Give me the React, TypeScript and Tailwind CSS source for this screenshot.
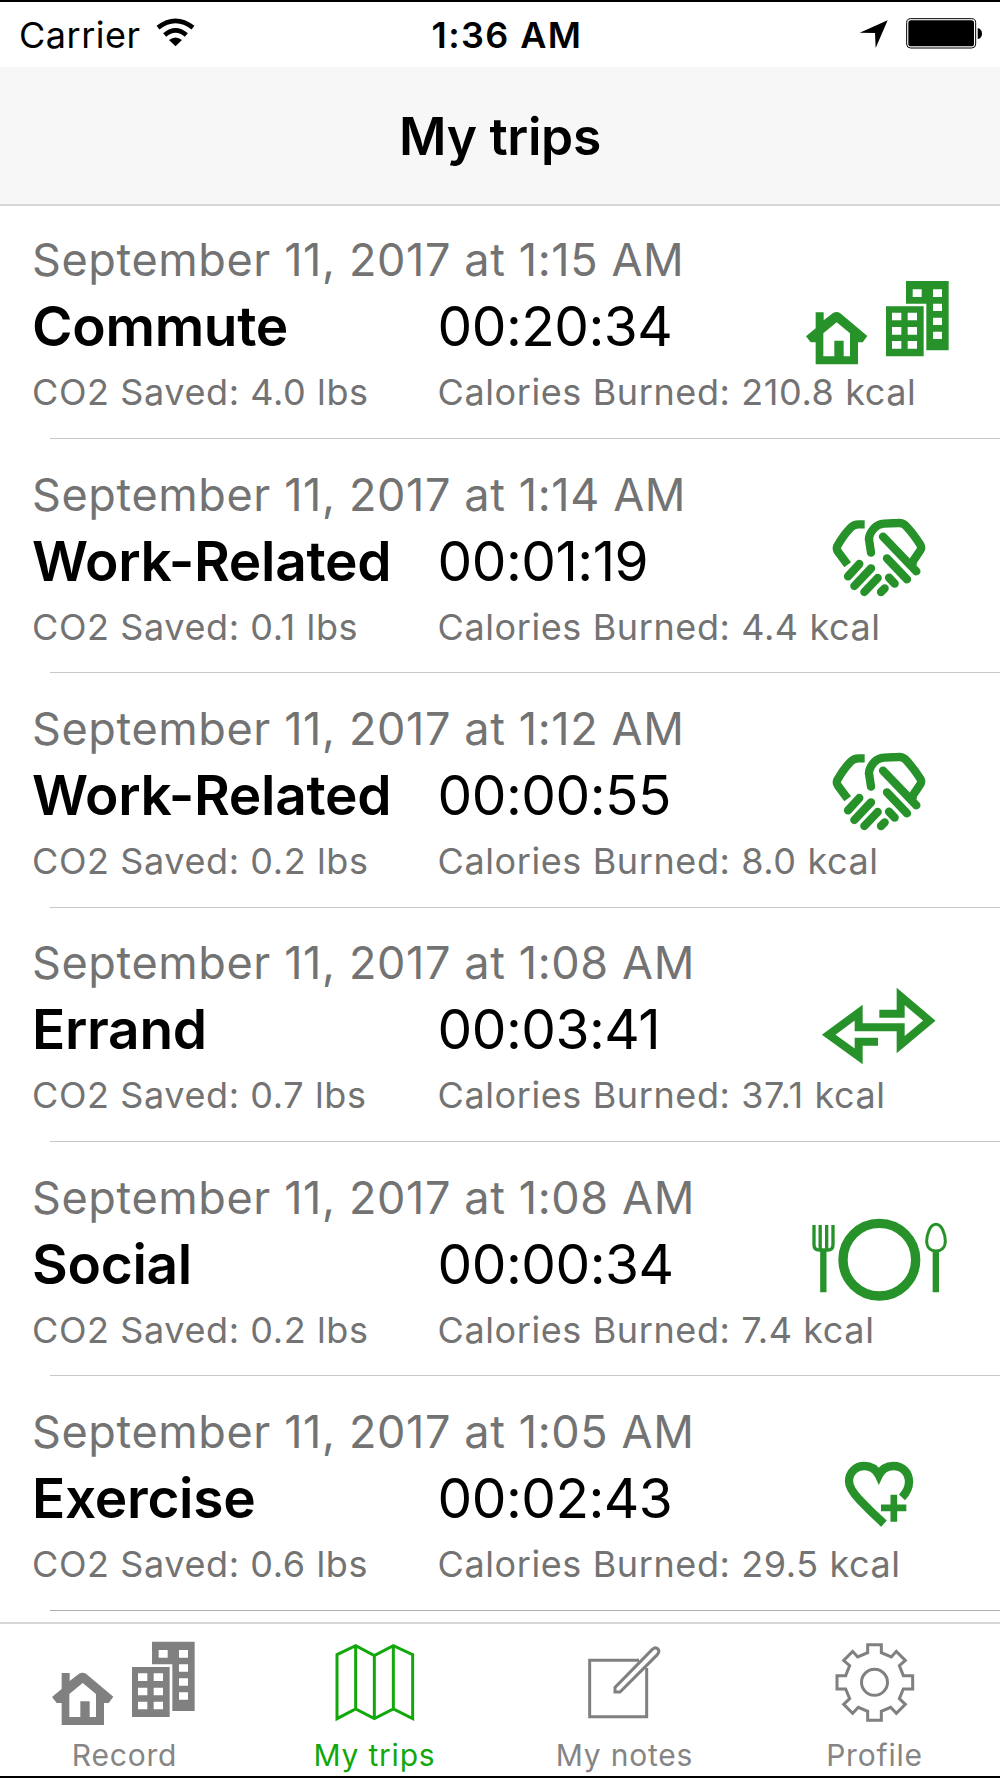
import type { FC, ReactNode } from "react";

type Purpose = "commute" | "work" | "errand" | "social" | "exercise";

interface Trip {
  date: string;
  name: string;
  purpose: Purpose;
  duration: string;
  co2: string;
  calories: string;
}

const trips: Trip[] = [
  {
    date: "September 11, 2017 at 1:15 AM",
    name: "Commute",
    purpose: "commute",
    duration: "00:20:34",
    co2: "4.0",
    calories: "210.8",
  },
  {
    date: "September 11, 2017 at 1:14 AM",
    name: "Work-Related",
    purpose: "work",
    duration: "00:01:19",
    co2: "0.1",
    calories: "4.4",
  },
  {
    date: "September 11, 2017 at 1:12 AM",
    name: "Work-Related",
    purpose: "work",
    duration: "00:00:55",
    co2: "0.2",
    calories: "8.0",
  },
  {
    date: "September 11, 2017 at 1:08 AM",
    name: "Errand",
    purpose: "errand",
    duration: "00:03:41",
    co2: "0.7",
    calories: "37.1",
  },
  {
    date: "September 11, 2017 at 1:08 AM",
    name: "Social",
    purpose: "social",
    duration: "00:00:34",
    co2: "0.2",
    calories: "7.4",
  },
  {
    date: "September 11, 2017 at 1:05 AM",
    name: "Exercise",
    purpose: "exercise",
    duration: "00:02:43",
    co2: "0.6",
    calories: "29.5",
  },
];

/* Home and office, shared by the commute row and the Record tab */
const CommuteShapes: FC = () => (
  <g fill="currentColor" fillRule="evenodd">
    <path d="M77 141H101V165L129 143Q140 137 150 143L232 212L218 231H204V297H77V231H62L48 213L77 189ZM100 273H133V226H161V273H180V204L140 171L100 204Z" />
    <path d="M348 47H476V255H409V115H348ZM368 72V95H395V72ZM429 72V95H456V72ZM429 115V137H456V115ZM429 157V179H456V157ZM429 199V221H456V199Z" />
    <path d="M288 123H401V273H288ZM306 142V165H334V142ZM353 142V165H381V142ZM306 185V208H334V185ZM353 185V208H381V185ZM306 227V250H334V227ZM353 227V250H381V227Z" />
  </g>
);

const purposeIcons: Record<Purpose, { viewBox: string; shapes: ReactNode }> = {
  commute: { viewBox: "0 -115 510 432", shapes: <CommuteShapes /> },
  work: {
    viewBox: "-60 -116 510 432",
    shapes: (
      <g fill="none" stroke="currentColor" strokeWidth="25">
        <path d="M164 71H146Q132 71 123 80Q100 103 82 136Q78 145 84 153L113 192" />
        <path d="M306 186L331 149Q336 141 331 132Q308 97 287 75Q278 66 264 67L222 69Q204 70 192 83Q176 101 177 118" />
        <path
          strokeLinecap="round"
          d="M177 116L183 156M219 108L319 212M306 186L308 190M231 173L291 236M237 231L254 249M213 274L224 263M148 190L114 227M183 203L133 256M203 232L163 274"
        />
      </g>
    ),
  },
  errand: {
    viewBox: "-30 -121 510 432",
    shapes: (
      <path
        fill="none"
        stroke="currentColor"
        strokeWidth="24"
        d="M238 130H302V78L388 151L302 223V171H176V127L86 193L176 258V214H234"
      />
    ),
  },
  social: {
    viewBox: "-30 -121 510 432",
    shapes: (
      <g fill="none" stroke="currentColor">
        <circle cx="238" cy="163" r="109" strokeWidth="28" />
        <path
          strokeWidth="10"
          d="M42 59V118Q42 134 58 134H83Q99 134 99 118V59M60.5 59V134M80 59V134"
        />
        <path
          strokeWidth="9"
          d="M408 57C426 57 436 88 436 107C436 126 424 137 408 137C392 137 380 126 380 107C380 88 390 57 408 57Z"
        />
        <path strokeWidth="19" d="M70 134V261M407.500 138V261" />
      </g>
    ),
  },
  exercise: {
    viewBox: "-120 -153 510 432",
    shapes: (
      <g fill="none" stroke="currentColor">
        <path
          strokeWidth="25"
          d="M162 221Q122 185 88 149Q57 116 57 94C57 66 78 48 103 48C124 48 138 58 146.500 76C155 58 168 48 190 48C218 48 237 68 237 96Q237 120 216 142"
        />
        <path strokeWidth="20" d="M153 173.500H229M191.500 134V215" />
      </g>
    ),
  },
};

const StatusBar: FC = () => (
  <div className="grid h-[65px] shrink-0 grid-cols-3 items-center text-4xl text-black">
    <div className="flex items-center gap-[15px] pl-[19px]">
      <span className="tracking-[0.5px]">Carrier</span>
      <svg width="39" height="29" viewBox="0 0 117 87" className="mb-[5px]">
        <g fill="none" stroke="currentColor" strokeWidth="14">
          <path d="M6 29Q58.500 -12 111 29" />
          <path d="M26 51Q58.500 23 91 51" />
        </g>
        <path fill="currentColor" d="M39 66Q58.500 51 78 66L58.500 85Z" />
      </svg>
    </div>
    <span className="pl-[14px] text-center font-semibold tracking-[1.4px]">
      1:36 AM
    </span>
    <div className="flex items-center justify-end gap-[18px] pr-[17px]">
      <svg width="29" height="29" viewBox="0 0 87 87">
        <path fill="currentColor" d="M86 1L50 84L48 39L2 38Z" />
      </svg>
      <svg width="77" height="31" viewBox="0 0 231 93" className="mb-[2px]">
        <rect
          x="2"
          y="2"
          width="207"
          height="88"
          rx="12"
          fill="none"
          stroke="currentColor"
          strokeWidth="3"
        />
        <rect x="7" y="7" width="197" height="78" rx="8" fill="currentColor" />
        <path fill="currentColor" d="M215 30Q228 33 228 47Q228 60 215 63Z" />
      </svg>
    </div>
  </div>
);

const TripRow: FC<{ trip: Trip }> = ({ trip }) => {
  const icon = purposeIcons[trip.purpose];

  return (
    <li className="group flex h-[234.36px] flex-col justify-between pt-[22.7px]">
      <div className="grid grid-cols-[405.5px_352.5px_1fr] grid-rows-[66px_66px_66px] pl-8 leading-[66px] whitespace-nowrap">
        <p className="col-span-2 text-[45px] tracking-[0.62px] text-[#737373]">
          {trip.date}
        </p>
        <svg
          width="170"
          height="144"
          viewBox={icon.viewBox}
          className="row-span-2 -mb-3 text-[#27922a]"
        >
          {icon.shapes}
        </svg>
        <p className="text-[55px] font-semibold tracking-[-0.3px]">
          {trip.name}
        </p>
        <p className="text-[55px] tracking-[-0.5px]">{trip.duration}</p>
        <p className="text-4xl leading-[66px] tracking-[0.6px] text-[#737373]">
          CO2 Saved: {trip.co2} lbs
        </p>
        <p className="col-span-2 text-4xl leading-[66px] tracking-[0.6px] text-[#737373]">
          Calories Burned: {trip.calories} kcal
        </p>
      </div>
      <div className="ml-[50px] h-px bg-[#c8c7cc] group-last:bg-[#adadb2]" />
    </li>
  );
};

interface TabProps {
  label: string;
  active?: boolean;
  children: ReactNode;
}

const Tab: FC<TabProps> = ({ label, active, children }) => (
  <a
    className={`flex flex-col items-center ${active ? "text-[#12a80c]" : "text-[#808080]"}`}
  >
    <svg width="250" height="110" viewBox="0 0 750 330" fill="none">
      {children}
    </svg>
    <span
      className={`pr-px text-[30px] leading-[42px] tracking-[0.8px] ${active ? "" : "text-[#858585]"}`}
    >
      {label}
    </span>
  </a>
);

const App: FC = () => (
  <div className="flex h-[1778px] w-[1000px] flex-col overflow-hidden border-y-2 border-black bg-white font-['Inter',sans-serif] text-black">
    <StatusBar />
    <header className="flex h-[139px] shrink-0 items-center justify-center border-b-2 border-[#d6d6d6] bg-[#f7f7f7] pt-[2px]">
      <h1 className="text-[51.5px] font-semibold tracking-[-0.3px]">
        My trips
      </h1>
    </header>

    {/* Trips */}
    <ul className="-mt-[1.4px] h-[1417.4px] shrink-0">
      {trips.map((trip) => (
        <TripRow key={trip.date + trip.name} trip={trip} />
      ))}
    </ul>

    {/* Tabs */}
    <nav className="grid grow grid-cols-4 border-t-2 border-[#d6d6d6]">
      <Tab label="Record">
        <g transform="translate(108 6)">
          <CommuteShapes />
        </g>
      </Tab>
      <Tab label="My trips" active>
        <path
          stroke="currentColor"
          strokeWidth="9"
          d="M261 92L317 65L373 95L430 65L488 92V284L430 255L373 284L317 255L261 284ZM317 65V255M373 95V284M430 65V255"
        />
      </Tab>
      <Tab label="My notes">
        <g stroke="currentColor" strokeWidth="9">
          <path d="M417 109H269V278H440V132" />
          <path d="M345 204V190L457 76Q466 68 474 75Q480 82 472 92L360 204Z" />
        </g>
      </Tab>
      <Tab label="Profile">
        <g stroke="currentColor" strokeWidth="9">
          <circle cx="373.500" cy="175" r="39" />
          <path d="M353 62H394V86L424 99L439 82L466 109L448 125L460 155H488V195H460L448 224L466 241L439 268L422 250L394 262V289H353V262L325 250L308 268L281 241L299 224L287 195H261V155H287L299 125L281 109L308 82L323 99L353 86Z" />
        </g>
      </Tab>
    </nav>
  </div>
);

export default App;
